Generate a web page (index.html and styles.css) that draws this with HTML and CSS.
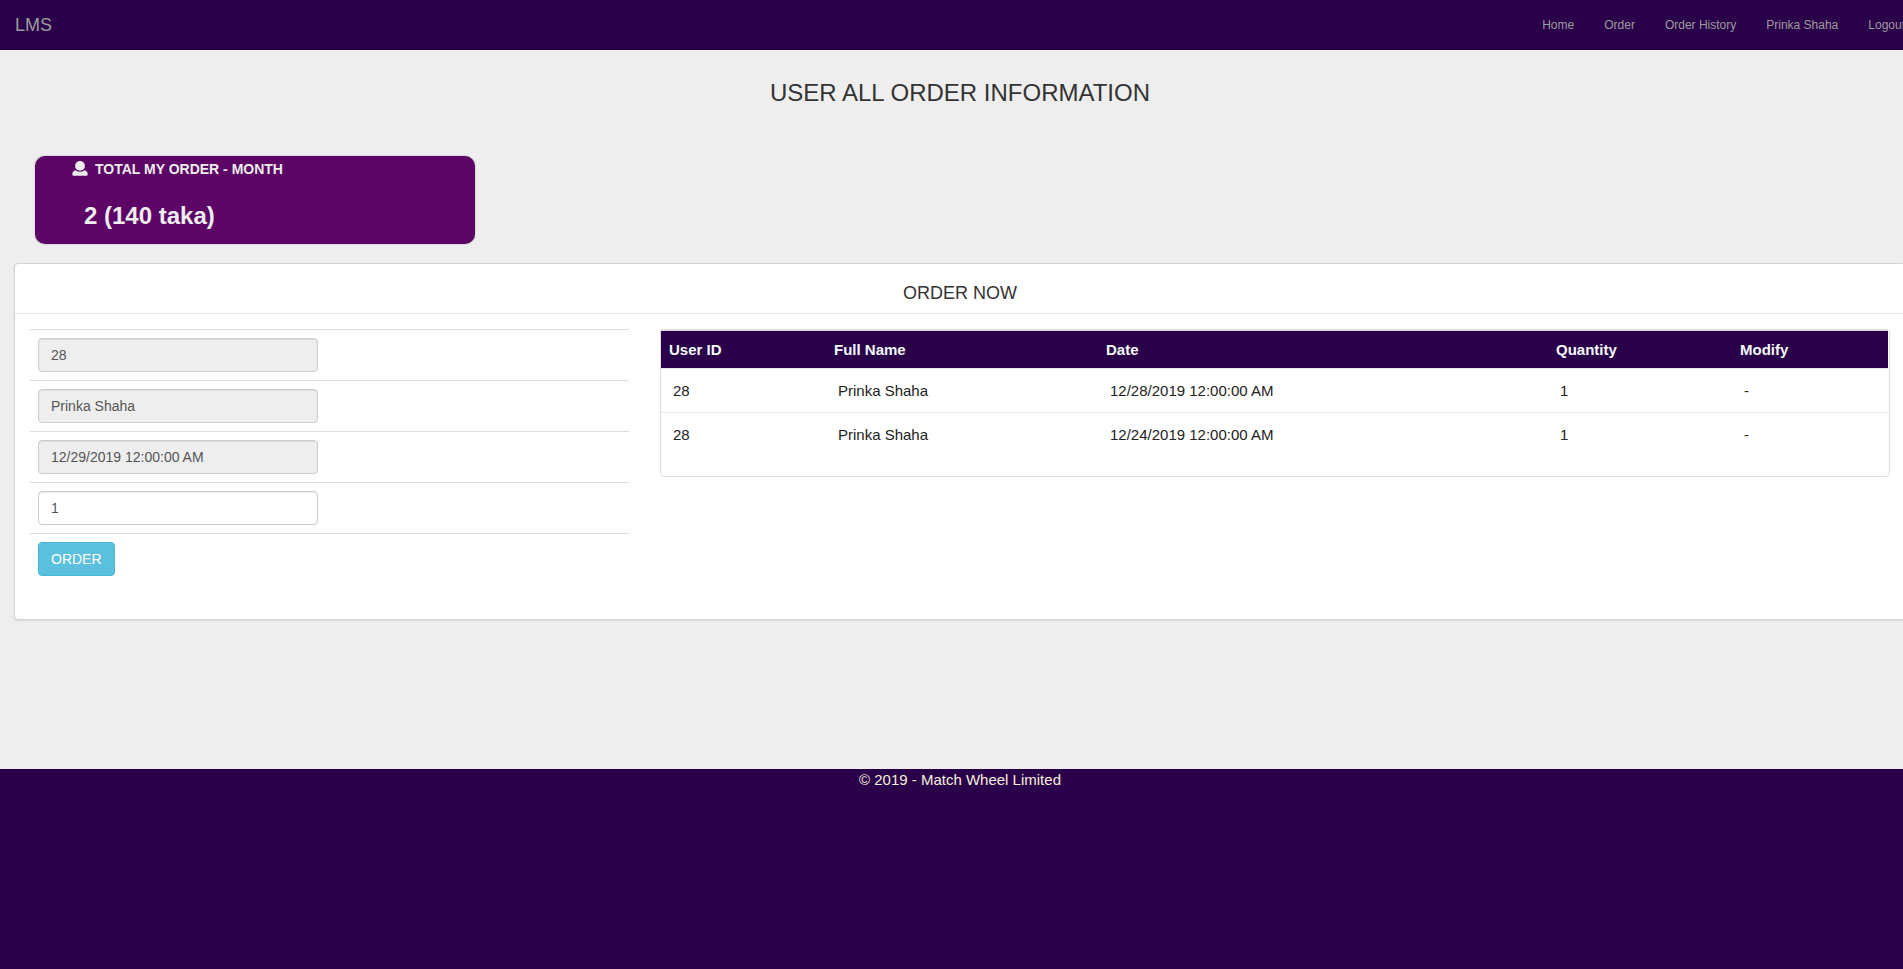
FILE: index.html
```
<!DOCTYPE html>
<html lang="en">
<head>
<meta charset="utf-8">
<title>LMS</title>
<link rel="stylesheet" href="styles.css">
</head>
<body>
<div class="page">
  <nav class="navbar">
    <a class="brand">LMS</a>
    <div class="links"><a>Home</a><a>Order</a><a>Order History</a><a>Prinka Shaha</a><a>Logout</a></div>
  </nav>
  <main class="main">
    <h3 class="title">USER ALL ORDER INFORMATION</h3>
    <section class="stat">
      <div class="stat-label">
        <svg class="user-icon" viewBox="0 0 16 15"><circle cx="8" cy="4.900" r="4.900"/><path d="M3.500 9.300Q8 12.300 12.500 9.300Q15.700 10 15.700 13.500Q15.600 14.800 14.300 14.800H1.700Q.4 14.800.3 13.500Q.3 10 3.500 9.300Z"/></svg>
        <span>TOTAL MY ORDER - MONTH</span>
      </div>
      <div class="stat-value">2 (140 taka)</div>
    </section>
    <section class="panel">
      <h4 class="panel-heading">ORDER NOW</h4>
      <div class="panel-body">
        <form class="order-form">
          <div class="form-row"><input class="control" value="28" disabled></div>
          <div class="form-row"><input class="control" value="Prinka Shaha" disabled></div>
          <div class="form-row"><input class="control" value="12/29/2019 12:00:00 AM" disabled></div>
          <div class="form-row"><input class="control" value="1"></div>
          <div class="form-row"><button class="btn" type="button">ORDER</button></div>
        </form>
        <div class="history">
          <table class="grid">
            <colgroup><col class="c-id"><col class="c-name"><col class="c-date"><col class="c-qty"><col></colgroup>
            <thead><tr><th>User ID</th><th>Full Name</th><th>Date</th><th>Quantity</th><th>Modify</th></tr></thead>
            <tbody>
              <tr><td>28</td><td>Prinka Shaha</td><td>12/28/2019 12:00:00 AM</td><td>1</td><td>-</td></tr>
              <tr><td>28</td><td>Prinka Shaha</td><td>12/24/2019 12:00:00 AM</td><td>1</td><td>-</td></tr>
            </tbody>
          </table>
        </div>
      </div>
    </section>
  </main>
  <footer class="footer">© 2019 - Match Wheel Limited</footer>
</div>
</body>
</html>
```
FILE: styles.css
```
* { box-sizing: border-box; }
html, body { height: 100%; }
body {
  margin: 0;
  overflow: hidden;
  background: #eee;
  color: #333;
  font: 14px/20px "Liberation Sans", Arial, sans-serif;
}
.page {
  width: 1920px;
  height: 969px;
  display: flex;
  flex-direction: column;
}
.navbar {
  height: 50px;
  flex: none;
  display: flex;
  justify-content: space-between;
  align-items: center;
  padding-left: 15px;
  background: #2b004a;
  border-bottom: 1px solid #1f0038;
  color: #9d9d9d;
}
.brand { font-size: 18px; }
.links { display: flex; font-size: 12px; }
.links a { padding: 0 15px; }
.main { height: 719px; flex: none; padding: 30px 14px 0; }
.title {
  margin: 0;
  text-align: center;
  font-size: 24px;
  font-weight: 400;
  line-height: 26px;
}
.stat {
  width: 440px;
  height: 88px;
  margin: 50px 0 0 21px;
  padding: 3px 0 0 37px;
  border-radius: 10px;
  background: #5c0566;
  box-shadow: 0 0 2px rgba(0, 0, 0, .3);
  color: #eee;
  font-weight: 700;
}
.stat-label { display: flex; align-items: center; gap: 7px; }
.user-icon { width: 16px; height: 15px; margin-top: -1px; fill: #eee; }
.stat-value { margin: 23px 0 0 12px; font-size: 24px; line-height: 28px; }
.panel {
  height: 357px;
  margin-top: 19px;
  background: #fff;
  border: 1px solid #d3d3d3;
  border-radius: 4px;
  box-shadow: 0 1px 2px rgba(0, 0, 0, .1);
}
.panel-heading {
  height: 50px;
  margin: 0;
  padding-top: 19px;
  border-bottom: 1px solid #e7e7e7;
  text-align: center;
  font-size: 18px;
  font-weight: 400;
}
.panel-body { display: flex; gap: 31px; padding: 15px; align-items: flex-start; }
.order-form { width: 599px; flex: none; }
.form-row { height: 51px; padding: 8px; border-top: 1px solid #ddd; }
.control {
  display: block;
  width: 280px;
  height: 34px;
  padding: 6px 12px;
  border: 1px solid #ccc;
  border-radius: 4px;
  background: #fff;
  box-shadow: inset 0 1px 1px rgba(0, 0, 0, .075);
  color: #555;
  font: inherit;
}
.control:disabled { background: #eee; }
.btn {
  display: block;
  height: 34px;
  padding: 6px 12px;
  border: 1px solid #46b8da;
  border-radius: 4px;
  background: #5bc0de;
  color: #fff;
  font: inherit;
}
.history {
  width: 1230px;
  flex: none;
  height: 148px;
  border: 1px solid #ddd;
  border-radius: 4px;
}
.grid {
  width: 1227px;
  table-layout: fixed;
  border-collapse: separate;
  border-spacing: 0;
  border-top: 1px solid #ddd;
  font-size: 15px;
}
.c-id { width: 165px; }
.c-name { width: 272px; }
.c-date { width: 450px; }
.c-qty { width: 184px; }
.grid th {
  height: 37px;
  padding: 0 8px;
  background: #2b004a;
  color: #f4fcfc;
  text-align: left;
}
.grid td { height: 44px; padding: 0 12px; border-top: 1px solid #e7e7e7; color: #222; }
.footer {
  flex: 1;
  padding-top: 1px;
  background: #2b004a;
  color: #f5f0dc;
  text-align: center;
  font-size: 15px;
}
```
